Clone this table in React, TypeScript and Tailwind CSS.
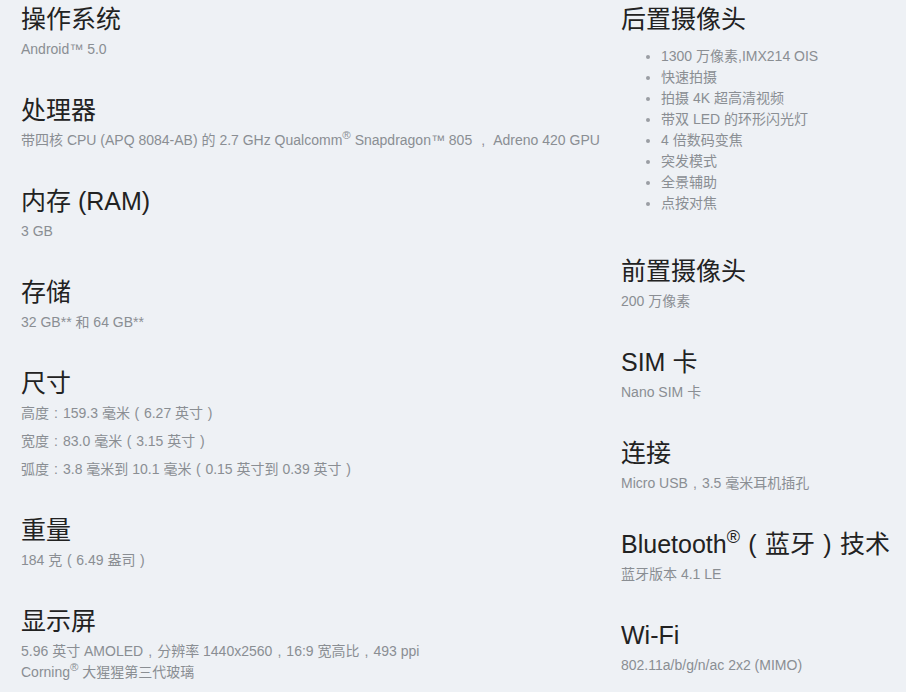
import type { ReactNode } from "react";

const font = { fontFamily: '"Liberation Sans", Arial, "Noto Sans CJK SC", sans-serif' };

const half: Record<string, string> = { "，": ",", "：": ":", "（": "(", "）": ")" };

// full-width punctuation sits centred in a 1em cell in the original
function cjk(text: string): ReactNode[] {
  return text.split(/([，：（）])/).map((part, i) =>
    half[part] ? (
      <span key={i} className="inline-block w-[1em] text-center leading-none">
        {half[part]}
      </span>
    ) : (
      part
    )
  );
}

const Reg = ({ big }: { big?: boolean }) => (
  <span
    className={`relative align-baseline leading-none ${big ? "-top-[0.55em] text-[0.72em]" : "-top-[0.5em] text-[0.82em]"}`}
  >
    ®
  </span>
);

type Spec = { title: ReactNode; lines?: ReactNode[]; block?: ReactNode[]; list?: string[] };

const left: Spec[] = [
  { title: "操作系统", block: ["Android™ 5.0"] },
  {
    title: "处理器",
    block: [
      <>
        带四核 CPU (APQ 8084-AB) 的 2.7 GHz Qualcomm<Reg /> Snapdragon™ 805 {cjk("，")} Adreno 420 GPU
      </>,
    ],
  },
  { title: "内存 (RAM)", block: ["3 GB"] },
  { title: "存储", block: ["32 GB** 和 64 GB**"] },
  {
    title: "尺寸",
    lines: [
      cjk("高度：159.3 毫米（6.27 英寸）"),
      cjk("宽度：83.0 毫米（3.15 英寸）"),
      cjk("弧度：3.8 毫米到 10.1 毫米（0.15 英寸到 0.39 英寸）"),
    ],
  },
  { title: "重量", block: [cjk("184 克（6.49 盎司）")] },
  {
    title: "显示屏",
    block: [
      cjk("5.96 英寸 AMOLED，分辨率 1440x2560，16:9 宽高比，493 ppi"),
      <>
        Corning<Reg /> 大猩猩第三代玻璃
      </>,
    ],
  },
];

const right: Spec[] = [
  {
    title: "后置摄像头",
    list: [
      "1300 万像素,IMX214 OIS",
      "快速拍摄",
      "拍摄 4K 超高清视频",
      "带双 LED 的环形闪光灯",
      "4 倍数码变焦",
      "突发模式",
      "全景辅助",
      "点按对焦",
    ],
  },
  { title: "前置摄像头", block: ["200 万像素"] },
  { title: "SIM 卡", block: ["Nano SIM 卡"] },
  { title: "连接", block: [cjk("Micro USB，3.5 毫米耳机插孔")] },
  {
    title: (
      <>
        Bluetooth<Reg big />
        {cjk("（蓝牙）")}技术
      </>
    ),
    block: ["蓝牙版本 4.1 LE"],
  },
  { title: "Wi-Fi", block: ["802.11a/b/g/n/ac 2x2 (MIMO)"] },
];

function Section({ s }: { s: Spec }) {
  return (
    <section className="mb-[32px]">
      <h3 className="text-[25px] leading-[36px] font-normal text-[#222]">{s.title}</h3>
      {s.block && (
        <div className="mt-[2px] text-[14px] leading-[21px] text-[#8a8e93]">
          {s.block.map((b, i) => (
            <div key={i}>{b}</div>
          ))}
        </div>
      )}
      {s.lines &&
        s.lines.map((l, i) => (
          <p key={i} className={`${i === 0 ? "mt-[2px]" : "mt-[7px]"} text-[14px] leading-[21px] text-[#8a8e93]`}>
            {l}
          </p>
        ))}
      {s.list && (
        <ul className="mt-[9px] pb-[7px] list-disc pl-[40px] text-[14px] leading-[21px] text-[#8a8e93] marker:text-[#9a9ea3]">
          {s.list.map((l) => (
            <li key={l}>{l}</li>
          ))}
        </ul>
      )}
    </section>
  );
}

export default function App() {
  return (
    <div className="min-h-[692px] w-[906px] overflow-hidden bg-[#eef1f5] pt-[1px]" style={font}>
      <div className="flex pl-[21px]">
        <div className="w-[600px] shrink-0">
          {left.map((s, i) => (
            <Section key={i} s={s} />
          ))}
        </div>
        <div className="flex-1 whitespace-nowrap">
          {right.map((s, i) => (
            <Section key={i} s={s} />
          ))}
        </div>
      </div>
    </div>
  );
}
